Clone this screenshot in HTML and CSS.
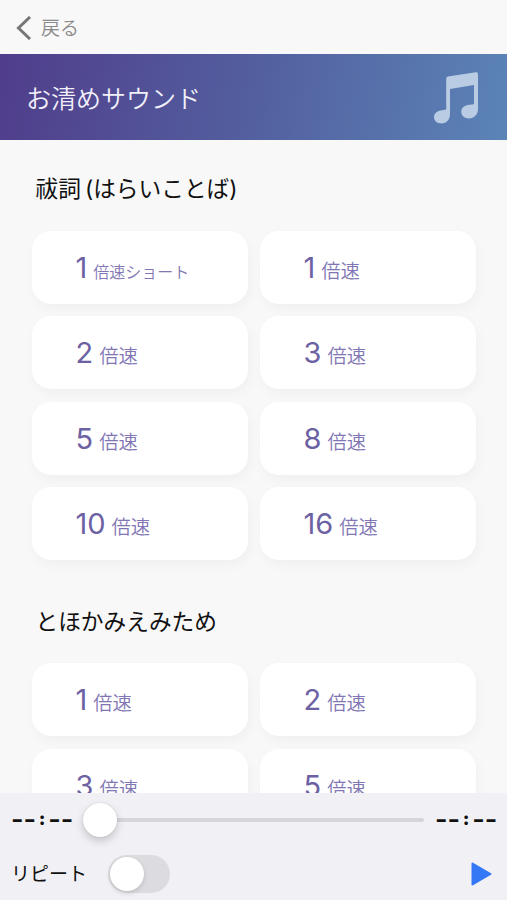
FILE: index.html
```html
<!DOCTYPE html>
<html lang="ja">
<head>
    <meta charset="UTF-8">
    <title>お清めサウンド</title>
    <link rel="stylesheet" href="styles.css">
</head>
<body>
    <div class="app">
        <nav class="nav">
            <svg class="back-icon" viewBox="0 0 16 24"><path d="M14 1 2.5 12 14 23"/></svg>
            <span>戻る</span>
        </nav>
        <header class="banner">
            <h1>お清めサウンド</h1>
            <svg class="note-icon" viewBox="0 0 46 54">
                <path d="M13.2 6.8Q13.2 5 15 4.6L42.8.3Q45 0 45 2V37C45 42.5 41 46.4 36.2 46.4C31.8 46.4 28.3 44 28.3 40C28.3 35.5 32 33.2 36.5 32.8L41 32.3V13L17 17V42C17 47.5 13.5 51.5 8.6 51.5C4.2 51.5 1 49 1 45.3C1 41 4.5 38.7 9 38.2L13.2 37.5Z"/>
            </svg>
        </header>
        <main class="content">
            <h2>祓詞<span class="paren open">(</span>はらいことば<span class="paren">)</span></h2>
            <div class="grid">
                <button class="card"><b>1</b><span class="small">倍速ショート</span></button>
                <button class="card"><b>1</b><span>倍速</span></button>
                <button class="card"><b>2</b><span>倍速</span></button>
                <button class="card"><b>3</b><span>倍速</span></button>
                <button class="card"><b>5</b><span>倍速</span></button>
                <button class="card"><b>8</b><span>倍速</span></button>
                <button class="card"><b>10</b><span>倍速</span></button>
                <button class="card"><b>16</b><span>倍速</span></button>
            </div>
            <h2>とほかみえみため</h2>
            <div class="grid">
                <button class="card"><b>1</b><span>倍速</span></button>
                <button class="card"><b>2</b><span>倍速</span></button>
                <button class="card"><b>3</b><span>倍速</span></button>
                <button class="card"><b>5</b><span>倍速</span></button>
            </div>
        </main>
        <footer class="player">
            <div class="seek">
                <span class="time">--<span class="colon">:</span>--</span>
                <div class="track"><div class="thumb"></div></div>
                <span class="time">--<span class="colon">:</span>--</span>
            </div>
            <div class="controls">
                <span class="label">リピート</span>
                <div class="switch"><div class="knob"></div></div>
                <svg class="play-icon" viewBox="0 0 21 24"><path d="M1.5 1.5v21L19.5 12z"/></svg>
            </div>
        </footer>
    </div>
</body>
</html>
```

FILE: styles.css
```css
* {
    box-sizing: border-box;
}
body {
    margin: 0;
    font-family: Inter, "Noto Sans CJK JP", sans-serif;
    background-color: #f8f8f8;
    color: #111;
}
.app {
    height: 900px;
    display: flex;
    flex-direction: column;
    overflow: hidden;
}
.nav {
    height: 54px;
    flex: none;
    display: flex;
    align-items: center;
    gap: 9px;
    padding: 2px 0 0 16px;
    font-size: 19px;
    font-weight: 350;
    line-height: 28px;
    color: #8a8a8a;
}
.nav span {
    padding-top: 2px;
}
.back-icon {
    width: 16px;
    height: 24px;
    fill: none;
    stroke: #777;
    stroke-width: 3;
}
.banner {
    height: 86px;
    flex: none;
    display: flex;
    align-items: center;
    justify-content: space-between;
    padding: 3px 28px 0 26px;
    background: linear-gradient(100deg, #503d8b 0%, #535f9f 50%, #5b84b7 100%);
}
h1 {
    margin: 0;
    font-size: 25px;
    font-weight: 350;
    line-height: 36px;
    color: #f1f0fa;
}
.note-icon {
    width: 46px;
    height: 54px;
    fill: #bacce3;
}
.content {
    flex: 1;
    min-height: 0;
    overflow: hidden;
    padding: 32px 31px 0 32px;
}
h2 {
    margin: 0 0 24.5px 3.5px;
    font-size: 22.7px;
    font-weight: 400;
    line-height: 34px;
}
.paren.open {
    margin-left: 4px;
}
.grid {
    display: grid;
    grid-template-columns: 1fr 1fr;
    grid-auto-rows: 73px;
    gap: 12.5px 12px;
    margin-bottom: 44.5px;
}
.card {
    display: flex;
    align-items: baseline;
    gap: 6px;
    padding: 19px 0 0 43.5px;
    border: none;
    border-radius: 19px;
    background-color: #fff;
    box-shadow: 2px 5px 12px rgba(0, 0, 0, 0.035);
    font-family: inherit;
    font-size: 19.3px;
    font-weight: 350;
    line-height: 36px;
    color: #8176b3;
}
.card b {
    font-size: 29px;
    font-weight: 400;
    color: #6c62a3;
}
.card .small {
    font-size: 16px;
}
.player {
    height: 107px;
    flex: none;
    background-color: #f0f0f5;
}
.seek {
    height: 54px;
    display: flex;
    align-items: center;
    justify-content: space-between;
    padding: 0 11px;
}
.time {
    width: 61px;
    font-size: 27px;
    font-weight: 600;
    line-height: 24px;
    white-space: nowrap;
}
.colon {
    display: inline-block;
    width: 12px;
    font-size: 18px;
    font-weight: 900;
    line-height: 1;
    text-align: center;
    vertical-align: 4px;
}
.track {
    width: 341px;
    height: 4px;
    border-radius: 2px;
    background-color: #d6d6da;
    display: flex;
    align-items: center;
}
.thumb {
    width: 34px;
    height: 34px;
    flex: none;
    border-radius: 50%;
    background-color: #fff;
    box-shadow: 0 4px 8px rgba(0, 0, 0, 0.18), 0 0 2px rgba(0, 0, 0, 0.12);
}
.controls {
    height: 53px;
    display: flex;
    align-items: center;
    padding: 0 15px 0 11px;
}
.label {
    width: 97px;
    padding-top: 2px;
    font-size: 19px;
    line-height: 28px;
}
.switch {
    width: 62px;
    height: 38px;
    padding: 2px;
    border-radius: 19px;
    background-color: #dcdce0;
}
.knob {
    width: 34px;
    height: 34px;
    border-radius: 50%;
    background-color: #fff;
    box-shadow: 0 2px 5px rgba(0, 0, 0, 0.14);
}
.play-icon {
    width: 21px;
    height: 24px;
    margin-left: auto;
    fill: #3478f6;
    stroke: #3478f6;
    stroke-width: 2;
    stroke-linejoin: round;
}
```
